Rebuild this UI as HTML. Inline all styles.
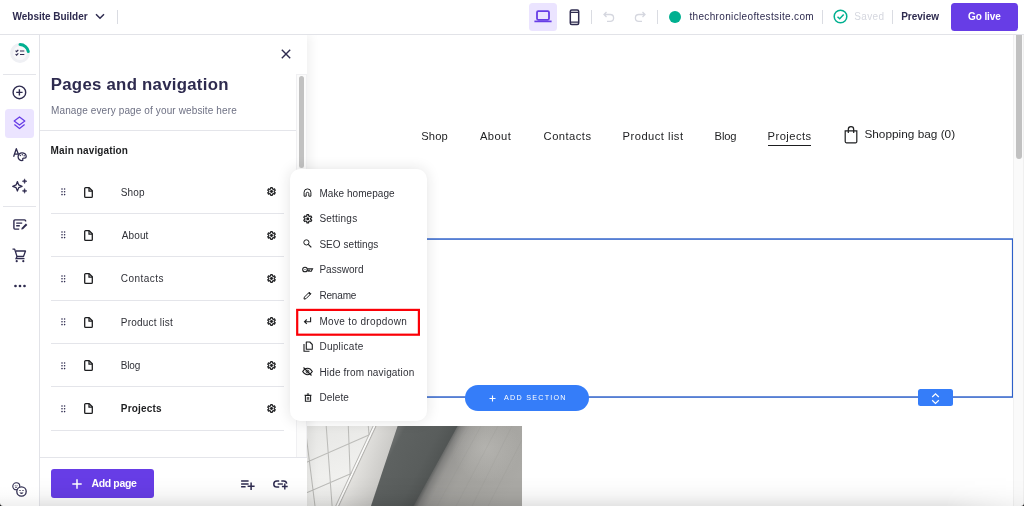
<!DOCTYPE html>
<html lang="en">
<head>
<meta charset="utf-8">
<title>Website Builder - Pages and navigation</title>
<style>
*{box-sizing:border-box;margin:0;padding:0}
html,body{width:1024px;height:506px;overflow:hidden;background:#fff}
body{font-family:"Liberation Sans",sans-serif;position:relative;will-change:transform}
.abs{position:absolute}
.t{position:absolute;white-space:nowrap;line-height:1;transform:translateY(-50%)}
svg{position:absolute;overflow:visible}
</style>
</head>
<body>
<main aria-label="Site preview">
<span class="t" style="left:421.20px;top:137.3px;font-size:11.2px;color:#1d1e20;letter-spacing:0.133px">Shop</span>
<span class="t" style="left:480.00px;top:137.3px;font-size:11.2px;color:#1d1e20;letter-spacing:0.375px">About</span>
<span class="t" style="left:543.60px;top:137.3px;font-size:11.2px;color:#1d1e20;letter-spacing:0.471px">Contacts</span>
<span class="t" style="left:622.60px;top:137.3px;font-size:11.2px;color:#1d1e20;letter-spacing:0.464px">Product list</span>
<span class="t" style="left:714.60px;top:137.3px;font-size:11.2px;color:#1d1e20;letter-spacing:-0.167px">Blog</span>
<span class="t" style="left:767.60px;top:137.3px;font-size:11.2px;color:#1d1e20;letter-spacing:0.457px">Projects</span>
<div class="abs" style="left:768px;top:144.5px;width:43px;height:1.2px;background:#1d1e20"></div>
<svg style="left:844.1px;top:126.2px" width="14" height="17.5" viewBox="0 0 14 17.5"><path d="M1.2 4.800h11.600v10.800a1.2 1.2 0 0 1-1.2 1.200H2.400a1.2 1.2 0 0 1-1.2-1.200z" fill="none" stroke="#1d1e20" stroke-width="1.2"/><path d="M4.3 7V3.400a2.7 2.7 0 0 1 5.4 0V7" fill="none" stroke="#1d1e20" stroke-width="1.2"/></svg>
<span class="t" style="left:864.40px;top:135.4px;font-size:11.8px;color:#1d1e20;letter-spacing:0.013px">Shopping bag (0)</span>
<svg style="left:286px;top:238px" width="728" height="161" viewBox="0 0 728 161"><rect x=".75" y="1.050" width="725.9" height="158" fill="none" stroke="#2c5fc9" stroke-width="1.5"/></svg>
<div class="abs" style="left:464.5px;top:385.2px;width:124px;height:25.4px;border-radius:13px;background:#357df9"></div>
<svg style="left:489.3px;top:394.5px" width="7" height="7" viewBox="0 0 7 7"><path d="M3.5.5v6M.5 3.500h6" stroke="#fff" stroke-width="1.1"/></svg>
<span class="t" style="left:504.00px;top:398.1px;font-size:7.2px;color:#fff;letter-spacing:1.240px">ADD SECTION</span>
<div class="abs" style="left:917.8px;top:389.2px;width:35.4px;height:17.3px;border-radius:2.5px;background:#357df9"></div>
<svg style="left:931px;top:391.5px" width="9" height="13" viewBox="0 0 9 13"><path d="M1.2 5 4.5 1.8 7.8 5M1.2 8.200l3.3 3.2 3.3-3.2" fill="none" stroke="#fff" stroke-width="1.2"/></svg>
<svg style="left:306.3px;top:425.8px" width="216.1" height="80.2" viewBox="0 0 216.1 80.2">
<defs>
<linearGradient id="band" gradientUnits="userSpaceOnUse" x1="78" y1="32" x2="131" y2="60"><stop offset="0" stop-color="#6a6d6c"/><stop offset=".08" stop-color="#5e6261"/><stop offset=".6" stop-color="#595d5c"/><stop offset="1" stop-color="#4b4f4e"/></linearGradient>
<linearGradient id="conc" gradientUnits="userSpaceOnUse" x1="129" y1="40" x2="199" y2="77"><stop offset="0" stop-color="#5f6160"/><stop offset=".05" stop-color="#80807e"/><stop offset=".14" stop-color="#999895"/><stop offset=".35" stop-color="#a3a29e"/><stop offset="1" stop-color="#aaa9a5"/></linearGradient>
<linearGradient id="wall" gradientUnits="userSpaceOnUse" x1="50" y1="36" x2="78" y2="45"><stop offset="0" stop-color="#e4e3e0"/><stop offset="1" stop-color="#cbcac7"/></linearGradient>
<linearGradient id="tile" x1="0" y1="0" x2="1" y2="1"><stop offset="0" stop-color="#e6e6e4"/><stop offset=".4" stop-color="#f1f1ef"/><stop offset="1" stop-color="#e8e8e6"/></linearGradient>
<radialGradient id="hl" gradientUnits="userSpaceOnUse" cx="180" cy="22" r="34"><stop offset="0" stop-color="#c0bfbb" stop-opacity=".55"/><stop offset="1" stop-color="#c0bfbb" stop-opacity="0"/></radialGradient>
<clipPath id="pc"><rect width="216.1" height="80.2"/></clipPath>
</defs>
<g clip-path="url(#pc)">
<rect width="216.1" height="80.2" fill="url(#tile)"/>
<g stroke="#bcbcb9" stroke-width="1.050" fill="none"><path d="M20.2 0 26.1 80.200M42.3 0 44.2 50M62.3 0 63 9M-1 0 9 80.200M0 36.5 68 6.700M0 67 47.5 46.6"/></g>
<polygon points="69.5,0 92.4,0 65.7,80.2 32,80.2" fill="url(#wall)"/>
<path d="M70 0 32.5 80.2" stroke="#b3b2af" stroke-width="1.1"/>
<path d="M68.5 0 31 80.2" stroke="#fbfbfa" stroke-width="1.4"/>
<path d="M67.1 0 29.6 80.2" stroke="#b9b8b5" stroke-width="1"/>
<polygon points="91.6,0 152.5,0 108.3,80.2 64.9,80.2" fill="url(#band)"/>
<polygon points="151.6,0 216.1,0 216.1,80.2 107.4,80.2" fill="url(#conc)"/>
<rect x="140" y="0" width="76" height="60" fill="url(#hl)"/>
<g stroke="#8f8e8b" stroke-width=".8" opacity=".22" fill="none"><path d="M175 0 131 80.200M192 0 150 80.200M206 0 166 80.200M216 14 182 80.200M163 0 120 80.2"/></g>
</g>
</svg>
<div class="abs" style="left:1013.4px;top:35px;width:10.6px;height:471px;background:#fafafa;border-left:1px solid #f1f1f1;border-right:1px solid #f0f0f0"></div>
<div class="abs" style="left:1016px;top:31px;width:6px;height:128.3px;border-radius:3px;background:#c1c1c1"></div>
</main>
<section aria-label="Pages and navigation">
<div class="abs" style="left:40px;top:35px;width:266.6px;height:471px;background:#fff;box-shadow:3px 0 10px rgba(0,0,0,.065)"></div>
<svg style="left:281px;top:49px" width="10" height="10" viewBox="0 0 10 10"><path d="M.8.800l8.4 8.400M9.2.8.8 9.2" stroke="#2e2b4f" stroke-width="1.4" fill="none"/></svg>
<span class="t" style="left:50.80px;top:85.3px;font-size:16.8px;font-weight:700;color:#2e2b4f;letter-spacing:0.268px">Pages and navigation</span>
<span class="t" style="left:51.00px;top:110.7px;font-size:10px;color:#6e7184;letter-spacing:0.122px">Manage every page of your website here</span>
<div class="abs" style="left:40px;top:130px;width:256px;height:1px;background:#e4e5ea"></div>
<div class="abs" style="left:295.8px;top:73.6px;width:10.8px;height:384px;background:#fbfbfb;border:1px solid #f0f0f2;border-bottom:0"></div>
<div class="abs" style="left:298.8px;top:75.8px;width:5.4px;height:92.4px;border-radius:3px;background:#c1c1c1"></div>
<span class="t" style="left:50.60px;top:151.4px;font-size:10px;font-weight:700;color:#1d1e20;letter-spacing:0.129px">Main navigation</span>
<svg style="left:61.4px;top:188.10000000000002px" width="4.6" height="7.6" viewBox="0 0 4.6 7.6" fill="#2e2b4f"><circle cx="1" cy="1" r="0.8"/><circle cx="1" cy="3.8" r="0.8"/><circle cx="1" cy="6.6" r="0.8"/><circle cx="3.6" cy="1" r="0.8"/><circle cx="3.6" cy="3.8" r="0.8"/><circle cx="3.6" cy="6.6" r="0.8"/></svg>
<svg style="left:83.5px;top:186.60000000000002px" width="9" height="11" viewBox="0 0 9 11"><path d="M1.6.7h3.6l3.1 3.100v5.600a.9.9 0 0 1-.9.9H1.600a.9.9 0 0 1-.9-.9V1.600a.9.9 0 0 1 .9-.9z" fill="none" stroke="#1d1e20" stroke-width="1.3" stroke-linejoin="round"/><path d="M5 .9v3.300h3.3" fill="none" stroke="#1d1e20" stroke-width="1.250"/></svg>
<span class="t" style="left:120.80px;top:192.7px;font-size:10px;color:#2f3037;letter-spacing:0.100px">Shop</span>
<svg style="left:267.2px;top:187.3px" width="9" height="9" viewBox="-5 -5 10 10"><polygon points="-0.84,-4.32 0.84,-4.32 1.09,-2.85 1.92,-2.37 3.32,-2.89 4.16,-1.43 3.01,-0.48 3.01,0.48 4.16,1.43 3.32,2.89 1.92,2.37 1.09,2.85 0.84,4.32 -0.84,4.32 -1.09,2.85 -1.92,2.37 -3.32,2.89 -4.16,1.43 -3.01,0.48 -3.01,-0.48 -4.16,-1.43 -3.32,-2.89 -1.92,-2.37 -1.09,-2.85" fill="none" stroke="#1d1e20" stroke-width="1.3" stroke-linejoin="round"/><circle r="1.6" fill="#1d1e20"/></svg>
<div class="abs" style="left:51px;top:213.0px;width:233.3px;height:1px;background:#e4e5ea"></div>
<svg style="left:61.4px;top:231.45000000000002px" width="4.6" height="7.6" viewBox="0 0 4.6 7.6" fill="#2e2b4f"><circle cx="1" cy="1" r="0.8"/><circle cx="1" cy="3.8" r="0.8"/><circle cx="1" cy="6.6" r="0.8"/><circle cx="3.6" cy="1" r="0.8"/><circle cx="3.6" cy="3.8" r="0.8"/><circle cx="3.6" cy="6.6" r="0.8"/></svg>
<svg style="left:83.5px;top:229.95000000000002px" width="9" height="11" viewBox="0 0 9 11"><path d="M1.6.7h3.6l3.1 3.100v5.600a.9.9 0 0 1-.9.9H1.600a.9.9 0 0 1-.9-.9V1.600a.9.9 0 0 1 .9-.9z" fill="none" stroke="#1d1e20" stroke-width="1.3" stroke-linejoin="round"/><path d="M5 .9v3.300h3.3" fill="none" stroke="#1d1e20" stroke-width="1.250"/></svg>
<span class="t" style="left:121.80px;top:236.1px;font-size:10px;color:#2f3037;letter-spacing:0.100px">About</span>
<svg style="left:267.2px;top:230.65px" width="9" height="9" viewBox="-5 -5 10 10"><polygon points="-0.84,-4.32 0.84,-4.32 1.09,-2.85 1.92,-2.37 3.32,-2.89 4.16,-1.43 3.01,-0.48 3.01,0.48 4.16,1.43 3.32,2.89 1.92,2.37 1.09,2.85 0.84,4.32 -0.84,4.32 -1.09,2.85 -1.92,2.37 -3.32,2.89 -4.16,1.43 -3.01,0.48 -3.01,-0.48 -4.16,-1.43 -3.32,-2.89 -1.92,-2.37 -1.09,-2.85" fill="none" stroke="#1d1e20" stroke-width="1.3" stroke-linejoin="round"/><circle r="1.6" fill="#1d1e20"/></svg>
<div class="abs" style="left:51px;top:256.4px;width:233.3px;height:1px;background:#e4e5ea"></div>
<svg style="left:61.4px;top:274.8px" width="4.6" height="7.6" viewBox="0 0 4.6 7.6" fill="#2e2b4f"><circle cx="1" cy="1" r="0.8"/><circle cx="1" cy="3.8" r="0.8"/><circle cx="1" cy="6.6" r="0.8"/><circle cx="3.6" cy="1" r="0.8"/><circle cx="3.6" cy="3.8" r="0.8"/><circle cx="3.6" cy="6.6" r="0.8"/></svg>
<svg style="left:83.5px;top:273.3px" width="9" height="11" viewBox="0 0 9 11"><path d="M1.6.7h3.6l3.1 3.100v5.600a.9.9 0 0 1-.9.9H1.600a.9.9 0 0 1-.9-.9V1.600a.9.9 0 0 1 .9-.9z" fill="none" stroke="#1d1e20" stroke-width="1.3" stroke-linejoin="round"/><path d="M5 .9v3.300h3.3" fill="none" stroke="#1d1e20" stroke-width="1.250"/></svg>
<span class="t" style="left:120.80px;top:279.4px;font-size:10px;color:#2f3037;letter-spacing:0.471px">Contacts</span>
<svg style="left:267.2px;top:274.0px" width="9" height="9" viewBox="-5 -5 10 10"><polygon points="-0.84,-4.32 0.84,-4.32 1.09,-2.85 1.92,-2.37 3.32,-2.89 4.16,-1.43 3.01,-0.48 3.01,0.48 4.16,1.43 3.32,2.89 1.92,2.37 1.09,2.85 0.84,4.32 -0.84,4.32 -1.09,2.85 -1.92,2.37 -3.32,2.89 -4.16,1.43 -3.01,0.48 -3.01,-0.48 -4.16,-1.43 -3.32,-2.89 -1.92,-2.37 -1.09,-2.85" fill="none" stroke="#1d1e20" stroke-width="1.3" stroke-linejoin="round"/><circle r="1.6" fill="#1d1e20"/></svg>
<div class="abs" style="left:51px;top:299.7px;width:233.3px;height:1px;background:#e4e5ea"></div>
<svg style="left:61.4px;top:318.15000000000003px" width="4.6" height="7.6" viewBox="0 0 4.6 7.6" fill="#2e2b4f"><circle cx="1" cy="1" r="0.8"/><circle cx="1" cy="3.8" r="0.8"/><circle cx="1" cy="6.6" r="0.8"/><circle cx="3.6" cy="1" r="0.8"/><circle cx="3.6" cy="3.8" r="0.8"/><circle cx="3.6" cy="6.6" r="0.8"/></svg>
<svg style="left:83.5px;top:316.65000000000003px" width="9" height="11" viewBox="0 0 9 11"><path d="M1.6.7h3.6l3.1 3.100v5.600a.9.9 0 0 1-.9.9H1.600a.9.9 0 0 1-.9-.9V1.600a.9.9 0 0 1 .9-.9z" fill="none" stroke="#1d1e20" stroke-width="1.3" stroke-linejoin="round"/><path d="M5 .9v3.300h3.3" fill="none" stroke="#1d1e20" stroke-width="1.250"/></svg>
<span class="t" style="left:120.80px;top:322.8px;font-size:10px;color:#2f3037;letter-spacing:0.218px">Product list</span>
<svg style="left:267.2px;top:317.35px" width="9" height="9" viewBox="-5 -5 10 10"><polygon points="-0.84,-4.32 0.84,-4.32 1.09,-2.85 1.92,-2.37 3.32,-2.89 4.16,-1.43 3.01,-0.48 3.01,0.48 4.16,1.43 3.32,2.89 1.92,2.37 1.09,2.85 0.84,4.32 -0.84,4.32 -1.09,2.85 -1.92,2.37 -3.32,2.89 -4.16,1.43 -3.01,0.48 -3.01,-0.48 -4.16,-1.43 -3.32,-2.89 -1.92,-2.37 -1.09,-2.85" fill="none" stroke="#1d1e20" stroke-width="1.3" stroke-linejoin="round"/><circle r="1.6" fill="#1d1e20"/></svg>
<div class="abs" style="left:51px;top:343.1px;width:233.3px;height:1px;background:#e4e5ea"></div>
<svg style="left:61.4px;top:361.50000000000006px" width="4.6" height="7.6" viewBox="0 0 4.6 7.6" fill="#2e2b4f"><circle cx="1" cy="1" r="0.8"/><circle cx="1" cy="3.8" r="0.8"/><circle cx="1" cy="6.6" r="0.8"/><circle cx="3.6" cy="1" r="0.8"/><circle cx="3.6" cy="3.8" r="0.8"/><circle cx="3.6" cy="6.6" r="0.8"/></svg>
<svg style="left:83.5px;top:360.00000000000006px" width="9" height="11" viewBox="0 0 9 11"><path d="M1.6.7h3.6l3.1 3.100v5.600a.9.9 0 0 1-.9.9H1.600a.9.9 0 0 1-.9-.9V1.600a.9.9 0 0 1 .9-.9z" fill="none" stroke="#1d1e20" stroke-width="1.3" stroke-linejoin="round"/><path d="M5 .9v3.300h3.3" fill="none" stroke="#1d1e20" stroke-width="1.250"/></svg>
<span class="t" style="left:120.80px;top:366.1px;font-size:10px;color:#2f3037;letter-spacing:-0.200px">Blog</span>
<svg style="left:267.2px;top:360.70000000000005px" width="9" height="9" viewBox="-5 -5 10 10"><polygon points="-0.84,-4.32 0.84,-4.32 1.09,-2.85 1.92,-2.37 3.32,-2.89 4.16,-1.43 3.01,-0.48 3.01,0.48 4.16,1.43 3.32,2.89 1.92,2.37 1.09,2.85 0.84,4.32 -0.84,4.32 -1.09,2.85 -1.92,2.37 -3.32,2.89 -4.16,1.43 -3.01,0.48 -3.01,-0.48 -4.16,-1.43 -3.32,-2.89 -1.92,-2.37 -1.09,-2.85" fill="none" stroke="#1d1e20" stroke-width="1.3" stroke-linejoin="round"/><circle r="1.6" fill="#1d1e20"/></svg>
<div class="abs" style="left:51px;top:386.4px;width:233.3px;height:1px;background:#e4e5ea"></div>
<svg style="left:61.4px;top:404.85px" width="4.6" height="7.6" viewBox="0 0 4.6 7.6" fill="#2e2b4f"><circle cx="1" cy="1" r="0.8"/><circle cx="1" cy="3.8" r="0.8"/><circle cx="1" cy="6.6" r="0.8"/><circle cx="3.6" cy="1" r="0.8"/><circle cx="3.6" cy="3.8" r="0.8"/><circle cx="3.6" cy="6.6" r="0.8"/></svg>
<svg style="left:83.5px;top:403.35px" width="9" height="11" viewBox="0 0 9 11"><path d="M1.6.7h3.6l3.1 3.100v5.600a.9.9 0 0 1-.9.9H1.600a.9.9 0 0 1-.9-.9V1.600a.9.9 0 0 1 .9-.9z" fill="none" stroke="#1d1e20" stroke-width="1.3" stroke-linejoin="round"/><path d="M5 .9v3.300h3.3" fill="none" stroke="#1d1e20" stroke-width="1.250"/></svg>
<span class="t" style="left:120.80px;top:409.4px;font-size:10px;font-weight:700;color:#1d1e20;letter-spacing:0.186px">Projects</span>
<svg style="left:267.2px;top:404.05px" width="9" height="9" viewBox="-5 -5 10 10"><polygon points="-0.84,-4.32 0.84,-4.32 1.09,-2.85 1.92,-2.37 3.32,-2.89 4.16,-1.43 3.01,-0.48 3.01,0.48 4.16,1.43 3.32,2.89 1.92,2.37 1.09,2.85 0.84,4.32 -0.84,4.32 -1.09,2.85 -1.92,2.37 -3.32,2.89 -4.16,1.43 -3.01,0.48 -3.01,-0.48 -4.16,-1.43 -3.32,-2.89 -1.92,-2.37 -1.09,-2.85" fill="none" stroke="#1d1e20" stroke-width="1.3" stroke-linejoin="round"/><circle r="1.6" fill="#1d1e20"/></svg>
<div class="abs" style="left:51px;top:429.8px;width:233.3px;height:1px;background:#e4e5ea"></div>
<div class="abs" style="left:40px;top:457px;width:266.6px;height:49px;background:#fff;border-top:1px solid #e4e5ea"></div>
<div class="abs" style="left:51.2px;top:469.2px;width:103px;height:28.6px;border-radius:3px;background:#673de6"></div>
<svg style="left:72.2px;top:478.9px" width="10" height="10" viewBox="0 0 10 10"><path d="M5 .3v9.400M.3 5h9.4" stroke="#fff" stroke-width="1.5"/></svg>
<span class="t" style="left:91.40px;top:482.9px;font-size:10.5px;font-weight:700;color:#fff;letter-spacing:-0.343px">Add page</span>
<svg style="left:241px;top:479.5px" width="14" height="11" viewBox="0 0 14 11"><path d="M.1 1h7.500M.1 3.900h7.500M.1 6.800h4.5" stroke="#2e2b4f" stroke-width="1.5" fill="none"/><path d="M10.1 2.600v7.400M6.6 6.200h7" stroke="#2e2b4f" stroke-width="1.5" fill="none"/></svg>
<svg style="left:273px;top:480px" width="15" height="10" viewBox="0 0 15 10"><path d="M6.2.9H3.900a3.1 3.1 0 0 0 0 6.200h2.300M8.3.9h2.300a3.1 3.1 0 0 1 3.1 2.7" stroke="#2e2b4f" stroke-width="1.5" fill="none"/><path d="M4.7 4h5.2" stroke="#2e2b4f" stroke-width="1.4"/><path d="M11.8 3.600v5.800M8.9 6.500h5.8" stroke="#2e2b4f" stroke-width="1.4"/></svg>
</section>
<aside aria-label="Builder tools">
<div class="abs" style="left:0px;top:35px;width:40px;height:471px;background:#fff;border-right:1px solid #e2e3e8"></div>
<svg style="left:8.7px;top:42px" width="22" height="22" viewBox="0 0 22 22"><circle cx="11" cy="11" r="8.4" fill="#f8f8fa" stroke="#eff0f4" stroke-width="3"/><path d="M11 2.600a8.4 8.4 0 0 1 8.3 7" fill="none" stroke="#00b090" stroke-width="3" stroke-linecap="round"/><path d="M6.6 8.700l1 1 1.7-1.900M6.6 12.200l1 1 1.7-1.900M11 9h4.300M11 12.500h4.3" fill="none" stroke="#2e2b4f" stroke-width="1.1"/></svg>
<div class="abs" style="left:3px;top:74.3px;width:33px;height:1px;background:#e4e5ea"></div>
<svg style="left:12px;top:85px" width="15" height="15" viewBox="0 0 15 15"><circle cx="7.4" cy="7.4" r="6.3" fill="none" stroke="#2e2b4f" stroke-width="1.4"/><path d="M7.4 4.200v6.400M4.2 7.400h6.4" stroke="#2e2b4f" stroke-width="1.4"/></svg>
<div class="abs" style="left:5.3px;top:109.1px;width:28.6px;height:28.5px;border-radius:3.5px;background:#ebe4ff"></div>
<svg style="left:13.3px;top:116.4px" width="13" height="14" viewBox="0 0 13 14"><path d="M6.5 1 11.8 5 6.5 9 1.2 5z" fill="none" stroke="#673de6" stroke-width="1.3" stroke-linejoin="round"/><path d="M1.4 8.6 6.5 12.600l5.1-4" fill="none" stroke="#673de6" stroke-width="1.3" stroke-linejoin="round"/></svg>
<svg style="left:12px;top:147px" width="17" height="15" viewBox="0 0 17 15"><path d="M1.6 9.7 4.3 1.7 6.7 8M2.5 7.200h3.6" fill="none" stroke="#2e2b4f" stroke-width="1.3" stroke-linejoin="round"/><path d="M10 5.800a3.9 3.9 0 1 0 0 7.800c1 0 1.1-.6.8-1.1-.4-.8.1-1.4.9-1.400h1c.8 0 1.5-.6 1.5-1.6 0-2.1-1.9-3.7-4.2-3.700z" fill="#fff" stroke="#2e2b4f" stroke-width="1.3"/><circle cx="8.3" cy="8.5" r=".7" fill="#2e2b4f"/><circle cx="10.3" cy="7.8" r=".7" fill="#2e2b4f"/><circle cx="12.2" cy="8.8" r=".7" fill="#2e2b4f"/></svg>
<svg style="left:12px;top:180px" width="16" height="14" viewBox="0 0 16 14"><path d="M5.4 1.6 6.7 4.900l3.4 1.4-3.4 1.4-1.3 3.3-1.3-3.300L.7 6.300l3.4-1.400z" fill="none" stroke="#2e2b4f" stroke-width="1.250" stroke-linejoin="round"/><path d="M12.6-1.200l.65 1.750 1.750.65-1.750.65-.65 1.750-.65-1.750-1.750-.65 1.750-.65zM12.6 8.500l.65 1.750 1.750.65-1.750.65-.65 1.750-.65-1.750-1.750-.65 1.750-.65z" fill="#2e2b4f" stroke="#2e2b4f" stroke-width=".5" stroke-linejoin="round"/></svg>
<div class="abs" style="left:3px;top:205.8px;width:33px;height:1px;background:#e4e5ea"></div>
<svg style="left:12.5px;top:218.8px" width="15" height="11" viewBox="0 0 15 11"><path d="M12.6 2.500V1.900a1 1 0 0 0-1-1H1.900a1 1 0 0 0-1 1v7.200a1 1 0 0 0 1 1h4.3" fill="none" stroke="#2e2b4f" stroke-width="1.4"/><path d="M3.2 4.100h6M3.2 6.800h3.6" stroke="#2e2b4f" stroke-width="1.4"/><path d="M8.3 10.600l.3-1.7 4.3-4.3 1.4 1.4-4.3 4.300z" fill="#2e2b4f"/></svg>
<svg style="left:12px;top:247.7px" width="15" height="15" viewBox="0 0 15 15"><path d="M.5 1.200h2.200l2.3 7.300h6.500l2-5.500H4" fill="none" stroke="#2e2b4f" stroke-width="1.3" stroke-linejoin="round"/><path d="M5 8.5 4 10.700h8.5" fill="none" stroke="#2e2b4f" stroke-width="1.3"/><circle cx="4.7" cy="13.2" r="1.1" fill="#2e2b4f"/><circle cx="11.3" cy="13.2" r="1.1" fill="#2e2b4f"/></svg>
<svg style="left:13.7px;top:284.3px" width="12" height="4" viewBox="0 0 12 4" fill="#2e2b4f"><circle cx="1.5" cy="2" r="1.350"/><circle cx="6" cy="2" r="1.350"/><circle cx="10.5" cy="2" r="1.350"/></svg>
<svg style="left:12px;top:482px" width="15" height="15" viewBox="0 0 15 15"><circle cx="4.3" cy="4.3" r="3.5" fill="#fff" stroke="#2e2b4f" stroke-width="1.1"/><path d="M2.8 3.700h.9M4.6 3.700h.9M3 5.300h2" stroke="#2e2b4f" stroke-width=".8"/><circle cx="9.5" cy="9.5" r="4.7" fill="#fff" stroke="#2e2b4f" stroke-width="1.3"/><path d="M7.3 8.500h1.400M10.3 8.500h1.4" stroke="#2e2b4f" stroke-width=".9"/><path d="M7.5 10.500a2.1 2.1 0 0 0 4 0z" fill="#2e2b4f"/></svg>
</aside>
<div role="menu" aria-label="Page actions">
<div class="abs" style="left:290px;top:169px;width:137px;height:252px;background:#fff;border-radius:10px;box-shadow:0 0 14px rgba(29,30,32,.125)"></div>
<svg style="left:303.1px;top:188.20000000000002px" width="9" height="9" viewBox="0 0 9 9"><path d="M1.1 8.200V4.300a3.4 3.4 0 0 1 6.8 0v3.900H5.800V5.600a1.3 1.3 0 0 0-2.6 0v2.600z" fill="none" stroke="#1d1e20" stroke-width="1" stroke-linejoin="round"/></svg>
<span class="t" style="left:319.40px;top:193.5px;font-size:10px;color:#2f3037;letter-spacing:0.058px">Make homepage</span>
<svg style="left:302.85px;top:213.55px" width="9.5" height="9.5" viewBox="-5 -5 10 10"><polygon points="-0.84,-4.32 0.84,-4.32 1.09,-2.85 1.92,-2.37 3.32,-2.89 4.16,-1.43 3.01,-0.48 3.01,0.48 4.16,1.43 3.32,2.89 1.92,2.37 1.09,2.85 0.84,4.32 -0.84,4.32 -1.09,2.85 -1.92,2.37 -3.32,2.89 -4.16,1.43 -3.01,0.48 -3.01,-0.48 -4.16,-1.43 -3.32,-2.89 -1.92,-2.37 -1.09,-2.85" fill="none" stroke="#1d1e20" stroke-width="1.3" stroke-linejoin="round"/><circle r="1.6" fill="#1d1e20"/></svg>
<span class="t" style="left:319.40px;top:219.1px;font-size:10px;color:#2f3037;letter-spacing:0.229px">Settings</span>
<svg style="left:303.1px;top:239.4px" width="9" height="9" viewBox="0 0 9 9"><circle cx="3.4" cy="3.4" r="2.6" fill="none" stroke="#1d1e20" stroke-width="1"/><path d="M5.3 5.3 8.3 8.3" stroke="#1d1e20" stroke-width="1.2"/></svg>
<span class="t" style="left:319.40px;top:244.7px;font-size:10px;color:#2f3037;letter-spacing:0.055px">SEO settings</span>
<svg style="left:301.6px;top:266.0px" width="11" height="7" viewBox="0 0 11 7"><circle cx="3" cy="3.5" r="2.3" fill="none" stroke="#1d1e20" stroke-width="1.1"/><circle cx="3" cy="3.5" r=".6" fill="#1d1e20"/><path d="M5.3 2.900h5.200L9.3 5.200H7.700L7 4.4 6.2 5.2 5.3 4.4" fill="none" stroke="#1d1e20" stroke-width="1.1"/></svg>
<span class="t" style="left:319.40px;top:270.3px;font-size:10px;color:#2f3037;letter-spacing:0.029px">Password</span>
<svg style="left:303.1px;top:290.6px" width="9" height="9" viewBox="0 0 9 9"><path d="M1 8.100l.4-2L6.3 1.200l1.6 1.600L3 7.700z" fill="none" stroke="#1d1e20" stroke-width="1" stroke-linejoin="round"/><path d="M5.3 2.2 6.3 1.200l1.6 1.6-1 1z" fill="#1d1e20"/></svg>
<span class="t" style="left:319.40px;top:295.9px;font-size:10px;color:#2f3037;letter-spacing:-0.160px">Rename</span>
<svg style="left:303.1px;top:316.2px" width="9" height="9" viewBox="0 0 9 9"><path d="M7.6 1.200v4.500H1.600M3.8 3.5 1.5 5.700l2.3 2.2" fill="none" stroke="#1d1e20" stroke-width="1.1"/></svg>
<span class="t" style="left:319.40px;top:321.5px;font-size:10px;color:#2f3037;letter-spacing:0.340px">Move to dropdown</span>
<svg style="left:302.6px;top:340.8px" width="10" height="11" viewBox="0 0 10 11"><path d="M3.3 1h3.500l2.5 2.500v4.800H3.300z" fill="none" stroke="#1d1e20" stroke-width="1.1" stroke-linejoin="round"/><path d="M1 3v7.300h5.5" fill="none" stroke="#1d1e20" stroke-width="1.1"/></svg>
<span class="t" style="left:319.40px;top:347.1px;font-size:10px;color:#2f3037;letter-spacing:0.275px">Duplicate</span>
<svg style="left:302.1px;top:367.4px" width="11" height="9" viewBox="0 0 11 9"><path d="M.7 4.500C2 2.3 3.6 1.3 5.5 1.300s3.5 1 4.8 3.200C9 6.7 7.4 7.7 5.5 7.700S2 6.7.7 4.500z" fill="none" stroke="#1d1e20" stroke-width="1.1"/><circle cx="5.5" cy="4.5" r="1.4" fill="none" stroke="#1d1e20" stroke-width="1"/><path d="M1.5.5l8 8" stroke="#1d1e20" stroke-width="1.1"/></svg>
<span class="t" style="left:319.40px;top:372.7px;font-size:10px;color:#2f3037;letter-spacing:0.163px">Hide from navigation</span>
<svg style="left:304.0px;top:392.9px" width="8" height="9.5" viewBox="0 0 8 9.5"><path d="M1.4 2.400h5.200v5.900H1.400zM.5 2.300h7M2.9 1h2.2" fill="none" stroke="#1d1e20" stroke-width="1.050"/><path d="M3.3 4v2.800M4.7 4v2.8" stroke="#1d1e20" stroke-width=".85"/></svg>
<span class="t" style="left:319.40px;top:398.3px;font-size:10px;color:#2f3037;letter-spacing:0.120px">Delete</span>
<svg style="left:296px;top:308px" width="125" height="29" viewBox="0 0 125 29"><rect x="1.2" y="1.9" width="121.7" height="24.8" fill="none" stroke="#fb0007" stroke-width="2.2"/></svg>
</div>
<header>
<div class="abs" style="left:0px;top:0px;width:1024px;height:35px;background:#fff;border-bottom:1px solid #e2e3e8"></div>
<span class="t" style="left:12.60px;top:17px;font-size:10px;font-weight:700;color:#2e2b4f;letter-spacing:-0.029px">Website Builder</span>
<svg style="left:95px;top:13px" width="10" height="7" viewBox="0 0 10 7"><path d="M1 1.3 5 5.300l4-4" fill="none" stroke="#2e2b4f" stroke-width="1.5"/></svg>
<div class="abs" style="left:117px;top:9.6px;width:1px;height:14px;background:#dadce2"></div>
<div class="abs" style="left:591px;top:9.6px;width:1px;height:14px;background:#dadce2"></div>
<div class="abs" style="left:657px;top:9.6px;width:1px;height:14px;background:#dadce2"></div>
<div class="abs" style="left:822px;top:9.6px;width:1px;height:14px;background:#dadce2"></div>
<div class="abs" style="left:892px;top:9.6px;width:1px;height:14px;background:#dadce2"></div>
<div class="abs" style="left:529px;top:2.6px;width:28px;height:28.2px;border-radius:3.5px;background:#ebe4ff"></div>
<svg style="left:534px;top:9px" width="18" height="14" viewBox="0 0 18 14"><rect x="3" y="2.2" width="12" height="8.6" rx="1.2" fill="none" stroke="#673de6" stroke-width="1.8"/><path d="M.4 12.400h17.2" stroke="#673de6" stroke-width="1.7"/></svg>
<svg style="left:568.7px;top:8.5px" width="11" height="16.5" viewBox="0 0 11 16.5"><rect x="1.3" y="1.1" width="8.4" height="14.3" rx="1.5" fill="none" stroke="#2e2b4f" stroke-width="1.5"/><path d="M1.5 3.400h8M1.5 13.100h8" stroke="#2e2b4f" stroke-width="1.1"/></svg>
<svg style="left:603px;top:11px" width="12" height="12" viewBox="0 0 12 12"><path d="M3.5 1 1 3.5 3.5 6M1.2 3.500h6a3.4 3.4 0 0 1 0 6.800H4" fill="none" stroke="#d5d7df" stroke-width="1.3"/></svg>
<svg style="left:634px;top:11px" width="12" height="12" viewBox="0 0 12 12"><path d="M8.5 1 11 3.5 8.5 6M10.8 3.500h-6a3.4 3.4 0 0 0 0 6.800H8" fill="none" stroke="#d5d7df" stroke-width="1.3"/></svg>
<div class="abs" style="left:669.3px;top:10.9px;width:11.8px;height:11.8px;border-radius:50%;background:#00b090"></div>
<span class="t" style="left:689.40px;top:17px;font-size:10px;color:#2e2b4f;letter-spacing:0.348px">thechronicleoftestsite.com</span>
<svg style="left:832.6px;top:9.1px" width="15" height="15" viewBox="0 0 15 15"><circle cx="7.5" cy="7.5" r="6.3" fill="none" stroke="#00b090" stroke-width="1.5"/><path d="M4.5 7.7 6.7 9.8 10.7 5.5" fill="none" stroke="#00b090" stroke-width="1.5"/></svg>
<span class="t" style="left:854.20px;top:17px;font-size:10px;color:#d5d7df;letter-spacing:0.400px">Saved</span>
<span class="t" style="left:901.20px;top:17px;font-size:10px;font-weight:700;color:#2e2b4f">Preview</span>
<div class="abs" style="left:951.2px;top:2.6px;width:66.8px;height:28.2px;border-radius:3.5px;background:#673de6"></div>
<span class="t" style="left:968.00px;top:17px;font-size:10px;font-weight:700;color:#fff;letter-spacing:-0.083px">Go live</span>
</header>
<!-- screenshot bottom shadow -->
<div class="abs" style="left:40px;top:476px;width:984px;height:30px;background:linear-gradient(to bottom,rgba(0,0,0,0) 0%,rgba(0,0,0,.012) 35%,rgba(0,0,0,.04) 65%,rgba(0,0,0,.105) 100%);-webkit-mask-image:linear-gradient(to right,#000 0,#000 92%,rgba(0,0,0,.35) 100%);mask-image:linear-gradient(to right,#000 0,#000 92%,rgba(0,0,0,.35) 100%)"></div>
<div class="abs" style="left:0px;top:486px;width:40px;height:20px;background:linear-gradient(to bottom,rgba(0,0,0,0) 0%,rgba(0,0,0,.015) 50%,rgba(0,0,0,.06) 100%)"></div>
<svg style="left:0px;top:503px" width="3" height="3" viewBox="0 0 3 3"><path d="M0 0a3 3 0 0 0 3 3H0z" fill="#111"/></svg>
<svg style="left:1021px;top:503px" width="3" height="3" viewBox="0 0 3 3"><path d="M3 0a3 3 0 0 1-3 3h3z" fill="#111"/></svg>
</body>
</html>
